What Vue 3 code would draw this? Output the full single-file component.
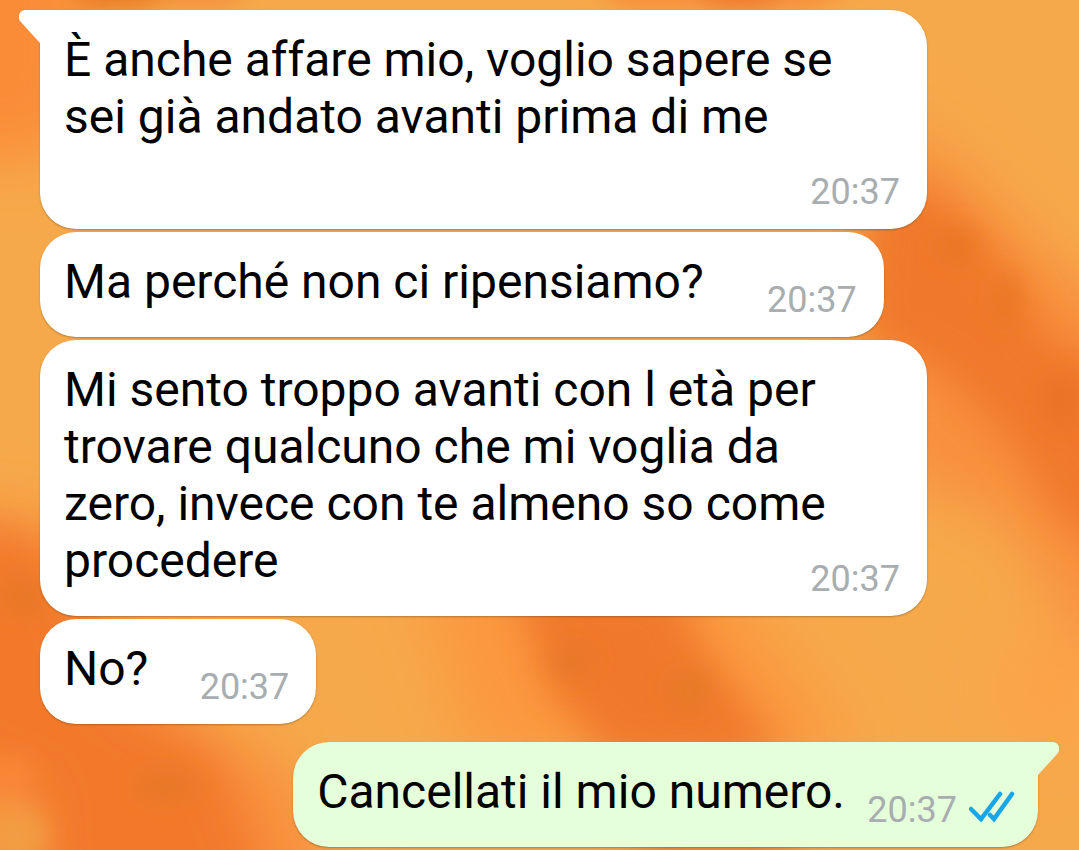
<script setup>
const messages = [
  { id: 1, side: 'in', tail: true, text: 'È anche affare mio, voglio sapere se sei già andato avanti prima di me', time: '20:37' },
  { id: 2, side: 'in', text: 'Ma perché non ci ripensiamo?', time: '20:37' },
  { id: 3, side: 'in', text: 'Mi sento troppo avanti con l età per trovare qualcuno che mi voglia da zero, invece con te almeno so come procedere', time: '20:37' },
  { id: 4, side: 'in', brief: true, text: 'No?', time: '20:37' },
  { id: 5, side: 'out', tail: true, read: true, text: 'Cancellati il mio numero.', time: '20:37' },
]
</script>

<template>
  <main class="chat">
    <svg class="wallpaper" viewBox="0 0 1079 850" preserveAspectRatio="none" aria-hidden="true">
      <defs>
        <filter id="wide" x="-50%" y="-50%" width="200%" height="200%">
          <feGaussianBlur stdDeviation="30" />
        </filter>
        <filter id="soft" x="-50%" y="-50%" width="200%" height="200%">
          <feGaussianBlur stdDeviation="20" />
        </filter>
        <filter id="fine" x="-50%" y="-50%" width="200%" height="200%">
          <feGaussianBlur stdDeviation="12" />
        </filter>
      </defs>
      <rect width="1079" height="850" fill="#f6a94b" />
      <g filter="url(#wide)">
        <path d="M-90 -90H90V110L40 160H-90Z" fill="#fa8c38" />
        <path d="M-90 500L60 520L170 690L300 780L360 940H-90Z" fill="#f88f3c" />
        <path d="M410 560H720L860 760H470Z" fill="#fb983f" />
        <path d="M880 110L960 170L1060 270L1170 330V660L1080 640L1010 520L880 470Z" fill="#f88f3c" />
        <ellipse cx="1050" cy="690" rx="50" ry="60" fill="#fda24a" />
      </g>
      <g filter="url(#soft)">
        <path d="M-60 520L40 540L120 700L220 760L280 920H50L40 790L-60 750Z" fill="#f2792b" />
        <path d="M510 580H670L710 660L790 760H610L550 690Z" fill="#f0782a" />
        <path d="M870 170L940 195L1000 260L1050 340L1130 370V560L1060 520L1010 440L940 370L860 340Z" fill="#f0782a" />
        <path d="M640 843H790V900H640Z" fill="#f0782a" />
      </g>
      <g filter="url(#fine)">
        <path d="M70 -40H190L150 8H80Z" fill="#e87824" />
        <path d="M190 -40H270L230 4H160Z" fill="#f28a38" />
        <path d="M570 -40H880L820 6H620Z" fill="#f68a39" />
        <path d="M690 -40H790L770 8H710Z" fill="#ee752a" />
        <ellipse cx="958" cy="246" rx="20" ry="16" fill="#e87622" />
        <ellipse cx="1006" cy="300" rx="14" ry="26" fill="#e97724" />
        <ellipse cx="1062" cy="400" rx="18" ry="26" fill="#e97227" />
        <ellipse cx="572" cy="662" rx="20" ry="16" fill="#e67825" />
        <ellipse cx="690" cy="690" rx="20" ry="20" fill="#e67a26" />
        <ellipse cx="165" cy="786" rx="32" ry="14" fill="#e67827" />
        <ellipse cx="24" cy="596" rx="22" ry="20" fill="#e77825" />
        <ellipse cx="10" cy="772" rx="22" ry="14" fill="#fc8838" />
        <ellipse cx="16" cy="836" rx="32" ry="28" fill="#f29d42" />
      </g>
    </svg>

    <article
      v-for="m in messages"
      :key="m.id"
      class="bubble"
      :class="[m.side, { tailed: m.tail, brief: m.brief, read: m.read }]"
    >
      <svg v-if="m.tail" class="tail" viewBox="0 0 22 34" aria-hidden="true">
        <path d="M22 0H6C1 0 -2 6 1 11L21 33H22Z" />
      </svg>
      <p class="text">{{ m.text }}<span class="reserve"></span></p>
      <footer class="meta">
        <time>{{ m.time }}</time>
        <svg v-if="m.read" class="ticks" viewBox="0 0 46 34" role="img" aria-label="Letto">
          <path d="M2 20L12 30L31 5M21 26L25 30L43 5" />
        </svg>
      </footer>
    </article>
  </main>
</template>

<style>
body {
  margin: 0;
  background: #f6a94b;
}
</style>

<style scoped>
.chat {
  position: relative;
  box-sizing: border-box;
  min-height: 100vh;
  padding: 10px 41px 3px 40px;
  display: flex;
  flex-direction: column;
  align-items: flex-start;
  gap: 3px;
  overflow: hidden;
  font-family: Roboto, sans-serif;
  color: #000;
}

.wallpaper {
  position: absolute;
  inset: 0;
  width: 100%;
  height: 100%;
}

.bubble {
  position: relative;
  box-sizing: border-box;
  max-width: calc(100% - 111px);
  padding: 21px 51px 27px 24px;
  border-radius: 36px;
  background: #fff;
  box-shadow: 0 1px 2px rgba(90, 60, 20, 0.4);
}

.bubble.in.tailed {
  border-top-left-radius: 0;
}

.bubble.out {
  align-self: flex-end;
  margin-top: 15px;
  background: #e5ffdb;
}

.bubble.out.tailed {
  border-top-right-radius: 0;
}

.tail {
  position: absolute;
  top: 0;
  right: calc(100% - 1px);
  width: 22px;
  height: 34px;
  fill: #fff;
}

.out .tail {
  right: auto;
  left: calc(100% - 1px);
  transform: scaleX(-1);
  fill: #e5ffdb;
}

.text {
  margin: 0;
  font-size: 48px;
  line-height: 57px;
}

.reserve {
  display: inline-block;
  width: 129px;
  height: 1px;
}

.brief .reserve {
  width: 117px;
}

.read .reserve {
  width: 142px;
}

.meta {
  position: absolute;
  right: 27px;
  bottom: 16px;
  display: flex;
  align-items: flex-start;
  gap: 12px;
  font-size: 36px;
  line-height: 42px;
  color: #a8adb0;
}

.read .meta {
  right: 23px;
}

.ticks {
  width: 46px;
  height: 34px;
  fill: none;
  stroke: #17a7e8;
  stroke-width: 4.5;
  stroke-linecap: round;
}
</style>
